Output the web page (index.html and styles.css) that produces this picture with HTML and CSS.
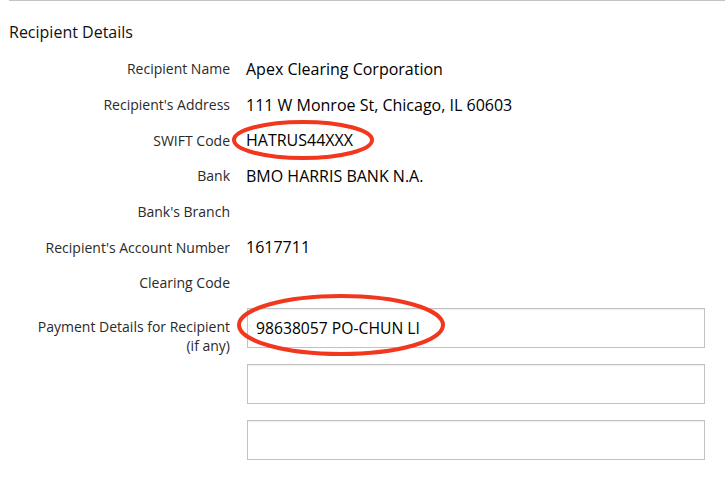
FILE: index.html
```html
<!DOCTYPE html>
<html lang="en">
<head>
<meta charset="utf-8">
<title>Recipient Details</title>
<link rel="stylesheet" href="styles.css">
</head>
<body>
<div class="panel">
  <h2 class="title">Recipient Details</h2>
  <div class="rows">
    <div class="label">Recipient Name</div><div class="value">Apex Clearing Corporation</div>
    <div class="label">Recipient's Address</div><div class="value">111 W Monroe St, Chicago, IL 60603</div>
    <div class="label">SWIFT Code</div><div class="value">HATRUS44XXX</div>
    <div class="label">Bank</div><div class="value">BMO HARRIS BANK N.A.</div>
    <div class="label">Bank's Branch</div><div class="value"></div>
    <div class="label">Recipient's Account Number</div><div class="value">1617711</div>
    <div class="label">Clearing Code</div><div class="value"></div>
  </div>
  <div class="payment">
    <div class="label plabel">Payment Details for Recipient<br>(if any)</div>
    <div class="inputs">
      <div class="field">98638057 PO-CHUN LI</div>
      <div class="field"></div>
      <div class="field"></div>
    </div>
  </div>
</div>
<svg class="marks" width="725" height="482" viewBox="0 0 725 482">
  <ellipse cx="303" cy="140" rx="69" ry="18" fill="none" stroke="#f2371f" stroke-width="4"/>
  <ellipse cx="341" cy="325" rx="102" ry="29" fill="none" stroke="#f2371f" stroke-width="4"/>
</svg>
</body>
</html>
```
FILE: styles.css
```css
html, body {
  margin: 0;
  padding: 0;
  background: #fff;
}
body {
  position: relative;
  width: 725px;
  height: 482px;
  overflow: hidden;
  font-family: "Open Sans", "Noto Sans", sans-serif;
  color: #111;
}
.panel {
  margin-left: 9px;
  border-top: 1px solid #c4c4c4;
}
.title {
  margin: 0;
  padding-top: 21px;
  font-size: 16px;
  line-height: 20px;
  font-weight: 400;
  color: #111;
}
.rows {
  margin-top: 9px;
  display: grid;
  grid-template-columns: 221px 1fr;
  grid-auto-rows: 35.7px;
  column-gap: 16px;
  align-items: center;
}
.label {
  text-align: right;
  font-size: 14px;
  line-height: 19px;
  color: #2a2a2a;
}
.value {
  font-size: 16px;
  line-height: 20px;
  font-weight: 500;
  color: #000;
}
.payment {
  margin-top: 7px;
  display: grid;
  grid-template-columns: 221px 458px;
  column-gap: 17px;
  align-items: start;
}
.plabel {
  padding-top: 9px;
}
.inputs {
  display: flex;
  flex-direction: column;
  gap: 16px;
}
.field {
  box-sizing: border-box;
  height: 40px;
  border: 1px solid #c2c2c2;
  box-shadow: inset 0 1px 1px rgba(0,0,0,0.07);
  padding: 0 8px;
  display: flex;
  align-items: center;
  font-size: 15.7px;
  font-weight: 500;
  color: #000;
}
.marks {
  position: absolute;
  left: 0;
  top: 0;
  pointer-events: none;
}
```
